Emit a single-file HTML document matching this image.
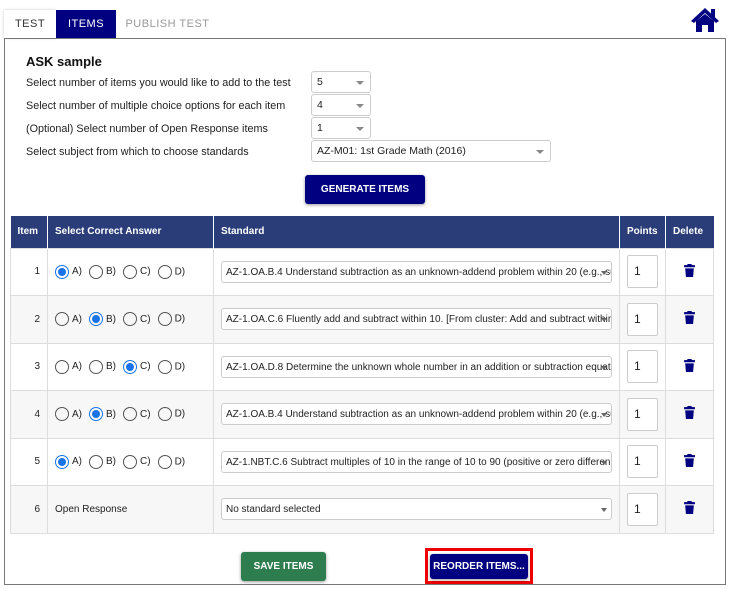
<!DOCTYPE html>
<html><head><style>
*{box-sizing:border-box}
body{margin:0;width:730px;height:589px;background:#fff;font-family:"Liberation Sans",Verdana,sans-serif;font-size:11px;color:#222;position:relative;overflow:hidden}
.abs{position:absolute}
.tab{position:absolute;top:10px;height:28px;line-height:28px;font-size:11px;text-align:center;letter-spacing:.5px}
.box{position:absolute;left:4px;top:38px;width:722px;height:547px;border:1px solid #777}
.sel{position:absolute;height:22px;border:1px solid #ccc;border-radius:3px;background:#fff;font-size:10.5px;line-height:20px;padding-left:5px;overflow:hidden;white-space:nowrap}
.sel:after{content:"";position:absolute;right:6px;top:9px;border-left:4px solid transparent;border-right:4px solid transparent;border-top:4px solid #888}
.lbl{position:absolute;left:26px;font-size:10.8px}
table{position:absolute;left:10px;top:216px;border-collapse:collapse;width:703px;table-layout:fixed}
th{background:#2a3d79;color:#fff;font-size:10px;font-weight:bold;text-align:left;height:32px;padding:0 7px;border-right:1px solid #fff}
td{height:47.5px;border:1px solid #ddd;padding:0 7px;font-size:10px;white-space:nowrap;overflow:hidden}
tr:nth-child(odd) td{background:#f7f7f7}
.r{display:inline-block;width:14px;height:14px;border:1px solid #555;border-radius:50%;vertical-align:middle;margin-right:3px;position:relative}
.r.on{border-color:#1a73e8}
.r.on:after{content:"";position:absolute;left:2px;top:2px;width:8px;height:8px;border-radius:50%;background:#1a73e8}
.o{margin-right:7px}
.std{position:relative;height:22px;border:1px solid #ccc;border-radius:3px;background:#fff;line-height:21px;padding:0 14px 0 4px;overflow:hidden;white-space:nowrap;font-size:10px}
.std:after{content:"";position:absolute;right:4px;top:9px;border-left:3px solid transparent;border-right:3px solid transparent;border-top:4px solid #666}
.pt{width:31px;height:33px;border:1px solid #ccc;border-radius:2px;background:#fff;line-height:31px;padding-left:6px;font-size:12px}
.btn{position:absolute;color:#fff;font-weight:bold;font-size:10px;text-align:center;border-radius:3px;box-shadow:0 1px 3px rgba(0,0,0,.4)}
</style></head><body>
<div class="tab" style="left:4px;width:52px;color:#333;box-shadow:0 0 3px rgba(0,0,0,.2)">TEST</div>
<div class="tab" style="left:56px;width:60px;background:#000080;color:#fff">ITEMS</div>
<div class="tab" style="left:120px;width:95px;color:#999">PUBLISH TEST</div>
<svg class="abs" style="left:690px;top:6px" width="30" height="26" viewBox="0 0 30 26"><path d="M15 2 L1 15 L4 17 L15 7 L26 17 L29 15 Z" fill="#000080"/><rect x="21" y="3" width="4" height="8" fill="#000080"/><path d="M6 15 L15 8 L24 15 V26 H18 V19 H12 V26 H6 Z" fill="#000080"/></svg>
<div class="box"></div>
<div class="abs" style="left:26px;top:54px;font-size:13px;font-weight:bold;color:#111">ASK sample</div>
<div class="lbl" style="top:77px">Select number of items you would like to add to the test</div>
<div class="lbl" style="top:100px">Select number of multiple choice options for each item</div>
<div class="lbl" style="top:123px">(Optional) Select number of Open Response items</div>
<div class="lbl" style="top:146px">Select subject from which to choose standards</div>
<div class="sel" style="left:311px;top:71px;width:60px">5</div>
<div class="sel" style="left:311px;top:94px;width:60px">4</div>
<div class="sel" style="left:311px;top:117px;width:60px">1</div>
<div class="sel" style="left:311px;top:140px;width:240px">AZ-M01: 1st Grade Math (2016)</div>
<div class="btn" style="left:305px;top:175px;width:120px;height:29px;line-height:29px;background:#000080">GENERATE ITEMS</div>
<table>
<colgroup><col style="width:37px"><col style="width:166px"><col style="width:406px"><col style="width:46px"><col style="width:48px"></colgroup>
<tr><th>Item</th><th>Select Correct Answer</th><th>Standard</th><th>Points</th><th style="border-right:0">Delete</th></tr>
<tr><td style="text-align:right">1</td><td><span class="r on"></span><span class="o">A)</span><span class="r"></span><span class="o">B)</span><span class="r"></span><span class="o">C)</span><span class="r"></span>D)</td><td><div class="std">AZ-1.OA.B.4 Understand subtraction as an unknown-addend problem within 20 (e.g., subtract</div></td><td><div class="pt">1</div></td><td style="text-align:center"><svg width="11" height="13" viewBox="0 0 10 12"><rect x="0" y="1" width="10" height="2" fill="#000080"/><rect x="3" y="0" width="4" height="2" fill="#000080"/><path d="M1 4H9L8.3 12H1.7Z" fill="#000080"/></svg></td></tr>
<tr><td style="text-align:right">2</td><td><span class="r"></span><span class="o">A)</span><span class="r on"></span><span class="o">B)</span><span class="r"></span><span class="o">C)</span><span class="r"></span>D)</td><td><div class="std">AZ-1.OA.C.6 Fluently add and subtract within 10. [From cluster: Add and subtract within 20]</div></td><td><div class="pt">1</div></td><td style="text-align:center"><svg width="11" height="13" viewBox="0 0 10 12"><rect x="0" y="1" width="10" height="2" fill="#000080"/><rect x="3" y="0" width="4" height="2" fill="#000080"/><path d="M1 4H9L8.3 12H1.7Z" fill="#000080"/></svg></td></tr>
<tr><td style="text-align:right">3</td><td><span class="r"></span><span class="o">A)</span><span class="r"></span><span class="o">B)</span><span class="r on"></span><span class="o">C)</span><span class="r"></span>D)</td><td><div class="std">AZ-1.OA.D.8 Determine the unknown whole number in an addition or subtraction equation</div></td><td><div class="pt">1</div></td><td style="text-align:center"><svg width="11" height="13" viewBox="0 0 10 12"><rect x="0" y="1" width="10" height="2" fill="#000080"/><rect x="3" y="0" width="4" height="2" fill="#000080"/><path d="M1 4H9L8.3 12H1.7Z" fill="#000080"/></svg></td></tr>
<tr><td style="text-align:right">4</td><td><span class="r"></span><span class="o">A)</span><span class="r on"></span><span class="o">B)</span><span class="r"></span><span class="o">C)</span><span class="r"></span>D)</td><td><div class="std">AZ-1.OA.B.4 Understand subtraction as an unknown-addend problem within 20 (e.g., subtract</div></td><td><div class="pt">1</div></td><td style="text-align:center"><svg width="11" height="13" viewBox="0 0 10 12"><rect x="0" y="1" width="10" height="2" fill="#000080"/><rect x="3" y="0" width="4" height="2" fill="#000080"/><path d="M1 4H9L8.3 12H1.7Z" fill="#000080"/></svg></td></tr>
<tr><td style="text-align:right">5</td><td><span class="r on"></span><span class="o">A)</span><span class="r"></span><span class="o">B)</span><span class="r"></span><span class="o">C)</span><span class="r"></span>D)</td><td><div class="std">AZ-1.NBT.C.6 Subtract multiples of 10 in the range of 10 to 90 (positive or zero differences)</div></td><td><div class="pt">1</div></td><td style="text-align:center"><svg width="11" height="13" viewBox="0 0 10 12"><rect x="0" y="1" width="10" height="2" fill="#000080"/><rect x="3" y="0" width="4" height="2" fill="#000080"/><path d="M1 4H9L8.3 12H1.7Z" fill="#000080"/></svg></td></tr>
<tr><td style="text-align:right">6</td><td>Open Response</td><td><div class="std">No standard selected</div></td><td><div class="pt">1</div></td><td style="text-align:center"><svg width="11" height="13" viewBox="0 0 10 12"><rect x="0" y="1" width="10" height="2" fill="#000080"/><rect x="3" y="0" width="4" height="2" fill="#000080"/><path d="M1 4H9L8.3 12H1.7Z" fill="#000080"/></svg></td></tr>
</table>
<div class="btn" style="left:241px;top:552px;width:85px;height:29px;line-height:29px;background:#2e7d4f">SAVE ITEMS</div>
<div class="abs" style="left:425px;top:548px;width:108px;height:36px;border:3px solid #e00"></div>
<div class="btn" style="left:430px;top:554px;width:98px;height:25px;line-height:25px;background:#000080">REORDER ITEMS...</div>
</body></html>
